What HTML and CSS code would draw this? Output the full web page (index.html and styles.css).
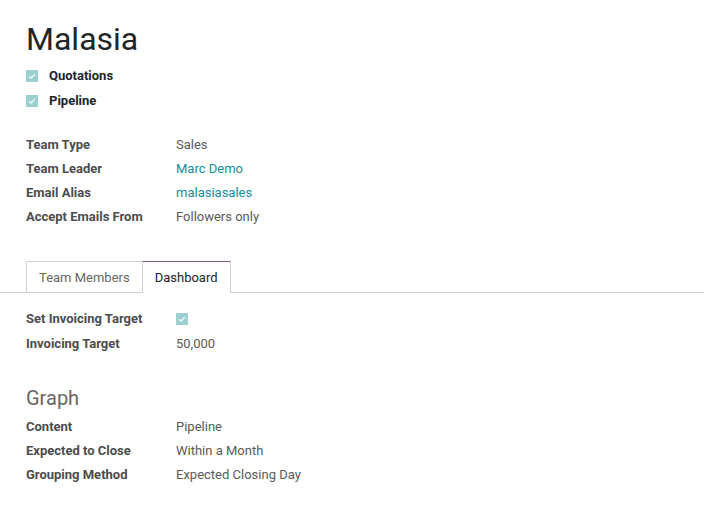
FILE: index.html
```html
<!DOCTYPE html>
<html>
<head>
<meta charset="utf-8">
<link rel="stylesheet" href="styles.css">
</head>
<body>
<div class="sheet">
  <div class="top">
    <h1 class="title">Malasia</h1>
    <div class="opts">
      <div class="opt"><span class="cb"><svg viewBox="0 0 12 12"><path d="M3.2 6.3 L5 8 L8.8 4.2" /></svg></span><span class="opt-label">Quotations</span></div>
      <div class="opt"><span class="cb"><svg viewBox="0 0 12 12"><path d="M3.2 6.3 L5 8 L8.8 4.2" /></svg></span><span class="opt-label">Pipeline</span></div>
    </div>
    <div class="fields fields-main">
      <div class="lbl">Team Type</div><div class="val">Sales</div>
      <div class="lbl">Team Leader</div><div class="val link">Marc Demo</div>
      <div class="lbl">Email Alias</div><div class="val link">malasiasales</div>
      <div class="lbl">Accept Emails From</div><div class="val">Followers only</div>
    </div>
  </div>
  <div class="tabs">
    <div class="tab">Team Members</div>
    <div class="tab active">Dashboard</div>
  </div>
  <div class="pane">
    <div class="fields fields-target">
      <div class="lbl">Set Invoicing Target</div><div class="val"><span class="cb"><svg viewBox="0 0 12 12"><path d="M3.2 6.3 L5 8 L8.8 4.2" /></svg></span></div>
      <div class="lbl">Invoicing Target</div><div class="val">50,000</div>
    </div>
    <h2 class="group">Graph</h2>
    <div class="fields">
      <div class="lbl">Content</div><div class="val">Pipeline</div>
      <div class="lbl">Expected to Close</div><div class="val">Within a Month</div>
      <div class="lbl">Grouping Method</div><div class="val">Expected Closing Day</div>
    </div>
  </div>
</div>
</body>
</html>
```
FILE: styles.css
```css
html, body {
  margin: 0;
  padding: 0;
  background: #ffffff;
}
body {
  font-family: Roboto, "Liberation Sans", sans-serif;
  font-size: 13px;
  color: #4c4c4c;
}
.sheet {
  width: 704px;
}
.top {
  padding: 20px 26px 0 26px;
}
.title {
  margin: 0;
  font-size: 32px;
  font-weight: 400;
  line-height: 38px;
  color: #212529;
}
.opts {
  margin-top: 5px;
  display: flex;
  flex-direction: column;
}
.opt {
  display: flex;
  align-items: center;
  height: 25px;
}
.cb {
  display: inline-flex;
  width: 12px;
  height: 12px;
  background: #9dd0d0;
  flex: none;
}
.cb svg {
  width: 12px;
  height: 12px;
}
.cb path {
  fill: none;
  stroke: #ffffff;
  stroke-width: 1.3;
  opacity: 0.85;
}
.opt-label {
  margin-left: 11px;
  font-weight: 700;
  color: #212529;
}
.fields {
  display: grid;
  grid-template-columns: 150px 1fr;
  grid-auto-rows: 24px;
  align-items: center;
}
.fields-main {
  margin-top: 19px;
}
.fields-target {
  grid-auto-rows: 25px;
}
.lbl {
  font-weight: 700;
  color: #4c4c4c;
}
.val {
  color: #5a5a5a;
  display: flex;
  align-items: center;
}
.link {
  color: #138f9b;
}
.tabs {
  margin-top: 33px;
  display: flex;
  padding-left: 26px;
  border-bottom: 1px solid #cfd0d4;
}
.tab {
  height: 29px;
  padding: 1px 12px 0 12px;
  line-height: 30px;
  border: 1px solid #cfd0d4;
  border-bottom: none;
  margin-bottom: -1px;
  color: #666666;
  background: #ffffff;
}
.tab.active {
  border-top: 1px solid #7d5a7d;
  color: #212529;
  padding-bottom: 1px;
}
.tab:first-child {
  border-right: none;
}
.pane {
  padding: 13px 26px 0 26px;
}
.group {
  margin: 29px 0 3px 0;
  font-size: 20px;
  font-weight: 400;
  line-height: 26px;
  color: #666666;
}
```
